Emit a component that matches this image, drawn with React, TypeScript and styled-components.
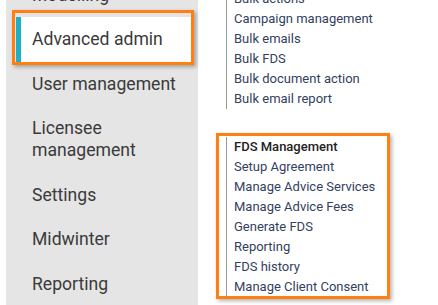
import styled, { createGlobalStyle } from "styled-components";

const GlobalStyle = createGlobalStyle`
  html, body {
    margin: 0;
    padding: 0;
    background: #fff;
    overflow: hidden;
  }
  body {
    font-family: Roboto, "Liberation Sans", sans-serif;
  }
`;

const Page = styled.div`
  display: flex;
  flex-flow: row nowrap;
  align-items: flex-start;
  width: 438px;
  height: 305px;
  overflow: hidden;
`;

const Sidebar = styled.nav`
  flex: 0 0 192px;
  margin-left: 6px;
  height: 305px;
  background: #e5e5e5;
`;

const MenuList = styled.ul`
  list-style: none;
  margin: -27.5px 0 0;
  padding: 0;
`;

const MenuItem = styled.li<{ $active?: boolean }>`
  position: relative;
  padding: 11.25px 8px 11.25px ${(p) => (p.$active ? "11px" : "26px")};
  margin: 0 ${(p) => (p.$active ? "7px 0 10px" : "0")};
  font-size: 17.6px;
  line-height: 22px;
  color: #3a3a3a;
  background: ${(p) => (p.$active ? "#fff" : "transparent")};
  border-left: ${(p) => (p.$active ? "5px solid #1fb0c9" : "none")};
`;

const Highlight = styled.div<{ $t: number; $l: number; $r: number; $b: number }>`
  position: absolute;
  top: ${(p) => p.$t}px;
  left: ${(p) => p.$l}px;
  right: ${(p) => p.$r}px;
  bottom: ${(p) => p.$b}px;
  border: 3px solid #ff7f11;
  box-shadow: 2px 2px 4px rgba(0, 0, 0, 0.3);
  pointer-events: none;
`;

const Column = styled.div`
  margin-left: 28px;
  display: flex;
  flex-direction: column;
`;

const Group = styled.div<{ $gap?: number }>`
  position: relative;
  margin-top: ${(p) => p.$gap ?? 0}px;
`;

const LinkList = styled.ul`
  list-style: none;
  margin: 0;
  padding: 0 0 0 7px;
  border-left: 1px solid #999;
`;

const LinkItem = styled.li<{ $heading?: boolean }>`
  font-size: 13px;
  line-height: 20px;
  white-space: nowrap;
  color: ${(p) => (p.$heading ? "#222" : "#33415e")};
  font-weight: ${(p) => (p.$heading ? 500 : 400)};
`;

const menu = [
  "Modelling",
  "Advanced admin",
  "User management",
  "Licensee management",
  "Settings",
  "Midwinter",
  "Reporting",
];

const bulkLinks = [
  "Bulk actions",
  "Campaign management",
  "Bulk emails",
  "Bulk FDS",
  "Bulk document action",
  "Bulk email report",
];

const fdsLinks = [
  "Setup Agreement",
  "Manage Advice Services",
  "Manage Advice Fees",
  "Generate FDS",
  "Reporting",
  "FDS history",
  "Manage Client Consent",
];

export default function App() {
  return (
    <>
      <GlobalStyle />
      <Page>
        <Sidebar>
          <MenuList>
            {menu.map((label) => {
              const active = label === "Advanced admin";
              return (
                <MenuItem key={label} $active={active}>
                  {label === "Licensee management" ? (
                    <>
                      Licensee
                      <br />
                      management
                    </>
                  ) : (
                    label
                  )}
                  {active && <Highlight $t={-7} $l={-9} $r={-3} $b={-3} />}
                </MenuItem>
              );
            })}
          </MenuList>
        </Sidebar>
        <Column>
          <Group $gap={-11.5}>
            <LinkList>
              {bulkLinks.map((l) => (
                <LinkItem key={l}>{l}</LinkItem>
              ))}
            </LinkList>
          </Group>
          <Group $gap={28.5}>
            <LinkList>
              <LinkItem $heading>FDS Management</LinkItem>
              {fdsLinks.map((l) => (
                <LinkItem key={l}>{l}</LinkItem>
              ))}
            </LinkList>
            <Highlight $t={-4} $l={-10} $r={-15} $b={-2} />
          </Group>
        </Column>
      </Page>
    </>
  );
}
